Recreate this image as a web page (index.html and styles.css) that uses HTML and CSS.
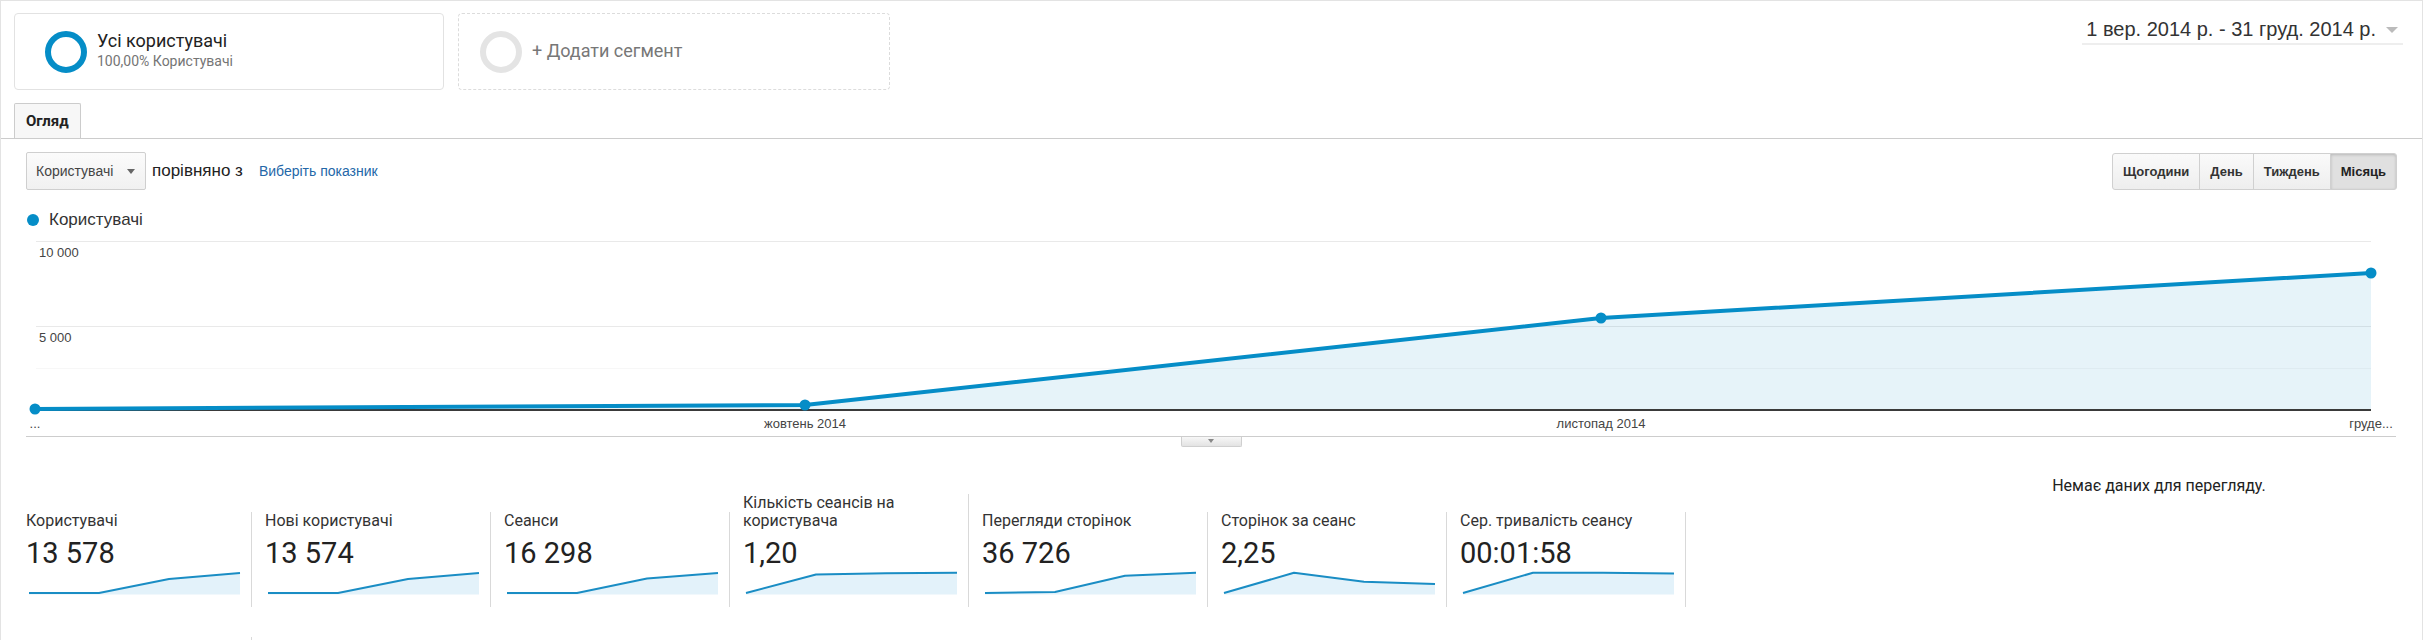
FILE: index.html
```html
<!DOCTYPE html>
<html lang="uk">
<head>
<meta charset="utf-8">
<title>Огляд</title>
<link rel="stylesheet" href="styles.css">
</head>
<body>
<div class="wrap">
  <header class="top">
    <div class="seg seg-all">
      <span class="ring"></span>
      <div class="seg-text">
        <div class="seg-title">Усі користувачі</div>
        <div class="seg-sub">100,00% Користувачі</div>
      </div>
    </div>
    <div class="seg seg-add">
      <span class="ring ring-off"></span>
      <span class="seg-add-label">+ Додати сегмент</span>
    </div>
    <div class="date">
      <span>1 вер. 2014 р. - 31 груд. 2014 р.</span>
      <span class="caret"></span>
    </div>
  </header>

  <nav class="tabs">
    <div class="tab">Огляд</div>
  </nav>

  <div class="controls">
    <div class="select">
      <span>Користувачі</span>
      <span class="select-caret"></span>
    </div>
    <span class="vs">порівняно з</span>
    <a class="pick" href="#">Виберіть показник</a>
    <div class="btn-group">
      <span class="btn">Щогодини</span>
      <span class="btn">День</span>
      <span class="btn">Тиждень</span>
      <span class="btn active">Місяць</span>
    </div>
  </div>

  <div class="legend">
    <span class="dot"></span>
    <span class="legend-text">Користувачі</span>
  </div>

  <svg class="chart" width="2421" height="206" viewBox="1 230 2421 206">
    <line x1="36" y1="241.5" x2="2371" y2="241.5" stroke="#e9e9e9" stroke-width="1"/>
    <line x1="36" y1="326.5" x2="2371" y2="326.5" stroke="#e9e9e9" stroke-width="1"/>
    <line x1="36" y1="368.5" x2="2371" y2="368.5" stroke="#f7f7f7" stroke-width="1"/>
    <text x="39" y="256.5" class="axis-t">10 000</text>
    <text x="39" y="341.5" class="axis-t">5 000</text>
    <polygon points="35,409 805,405 1601,318 2371,273 2371,410 35,410" fill="rgba(5,141,199,0.1)"/>
    <line x1="35" y1="410" x2="2371" y2="410" stroke="#3a3a3a" stroke-width="2"/>
    <polyline points="35,409 805,405 1601,318 2371,273" fill="none" stroke="#058dc7" stroke-width="4" stroke-linejoin="round"/>
    <circle cx="35" cy="409" r="5.5" fill="#058dc7"/>
    <circle cx="805" cy="405" r="5.5" fill="#058dc7"/>
    <circle cx="1601" cy="318" r="5.5" fill="#058dc7"/>
    <circle cx="2371" cy="273" r="5.5" fill="#058dc7"/>
    <text x="35" y="428" class="axis-t" text-anchor="middle">...</text>
    <text x="805" y="428" class="axis-t" text-anchor="middle">жовтень 2014</text>
    <text x="1601" y="428" class="axis-t" text-anchor="middle">листопад 2014</text>
    <text x="2371" y="428" class="axis-t" text-anchor="middle">груде...</text>
  </svg>

  <div class="chart-foot">
    <div class="toggle"><span class="toggle-caret"></span></div>
  </div>

  <section class="summary">
    <div class="tiles">
      <div class="tile-row">
        <div class="tile">
          <div class="tile-label">Користувачі</div>
          <div class="tile-value">13 578</div>
          <svg class="spark" viewBox="0 0 211 26"><polygon points="0,24 70,24 140,10 211,4 211,25.5 0,25.5" class="spark-fill"/><polyline points="0,24 70,24 140,10 211,4" class="spark-line"/></svg>
        </div>
        <div class="tile">
          <div class="tile-label">Нові користувачі</div>
          <div class="tile-value">13 574</div>
          <svg class="spark" viewBox="0 0 211 26"><polygon points="0,24 70,24 140,10 211,4 211,25.5 0,25.5" class="spark-fill"/><polyline points="0,24 70,24 140,10 211,4" class="spark-line"/></svg>
        </div>
        <div class="tile">
          <div class="tile-label">Сеанси</div>
          <div class="tile-value">16 298</div>
          <svg class="spark" viewBox="0 0 211 26"><polygon points="0,24 70,24 140,9.5 211,4 211,25.5 0,25.5" class="spark-fill"/><polyline points="0,24 70,24 140,9.5 211,4" class="spark-line"/></svg>
        </div>
        <div class="tile">
          <div class="tile-label">Кількість сеансів на<br>користувача</div>
          <div class="tile-value">1,20</div>
          <svg class="spark" viewBox="0 0 211 26"><polygon points="0,24 70,5.5 140,4.3 211,3.8 211,25.5 0,25.5" class="spark-fill"/><polyline points="0,24 70,5.5 140,4.3 211,3.8" class="spark-line"/></svg>
        </div>
        <div class="tile">
          <div class="tile-label">Перегляди сторінок</div>
          <div class="tile-value">36 726</div>
          <svg class="spark" viewBox="0 0 211 26"><polygon points="0,24 70,23 140,6.7 211,3.8 211,25.5 0,25.5" class="spark-fill"/><polyline points="0,24 70,23 140,6.7 211,3.8" class="spark-line"/></svg>
        </div>
        <div class="tile">
          <div class="tile-label">Сторінок за сеанс</div>
          <div class="tile-value">2,25</div>
          <svg class="spark" viewBox="0 0 211 26"><polygon points="0,24 70,3.8 140,12.7 211,15 211,25.5 0,25.5" class="spark-fill"/><polyline points="0,24 70,3.8 140,12.7 211,15" class="spark-line"/></svg>
        </div>
        <div class="tile">
          <div class="tile-label">Сер. тривалість сеансу</div>
          <div class="tile-value">00:01:58</div>
          <svg class="spark" viewBox="0 0 211 26"><polygon points="0,24 70,3.8 140,3.8 211,4.5 211,25.5 0,25.5" class="spark-fill"/><polyline points="0,24 70,3.8 140,3.8 211,4.5" class="spark-line"/></svg>
        </div>
      </div>
      <div class="tile-row tile-row-2">
        <div class="tile tile-empty"></div>
      </div>
    </div>
    <div class="nodata">Немає даних для перегляду.</div>
  </section>
</div>
</body>
</html>
```

FILE: styles.css
```css
* { box-sizing: border-box; }
html, body { margin: 0; padding: 0; background: #fff; }
body {
  font-family: Arial, "Liberation Sans", sans-serif;
  color: #222;
  width: 2423px;
  height: 640px;
  overflow: hidden;
}
.wrap {
  border: 1px solid #e3e3e3;
  border-bottom: 0;
  min-height: 720px;
}

/* header */
.top {
  display: flex;
  align-items: flex-start;
  padding: 12px 19px 0 13px;
}
.seg {
  height: 77px;
  border-radius: 4px;
  display: flex;
  align-items: center;
  font-family: Roboto, "Liberation Sans", sans-serif;
}
.seg-all {
  width: 430px;
  border: 1px solid #e2e2e2;
  padding-left: 30px;
}
.seg-add {
  width: 432px;
  margin-left: 14px;
  border: 1px dashed #dcdcdc;
  padding-left: 21px;
}
.ring {
  width: 42px;
  height: 42px;
  border-radius: 50%;
  border: 6px solid #058dc7;
  flex: none;
}
.ring-off { border-color: #e4e4e4; }
.seg-text { margin-left: 10px; margin-bottom: 5px; }
.seg-title { font-size: 18px; line-height: 21px; color: #222; }
.seg-sub { font-size: 14px; line-height: 16px; color: #757575; margin-top: 2px; }
.seg-add-label { margin-left: 10px; margin-bottom: 3px; font-size: 18px; color: #777; }

.date {
  margin-left: auto;
  margin-top: 4px;
  display: flex;
  align-items: center;
  padding: 0 5px 2px 4px;
  border-bottom: 2px solid #eee;
  font-size: 20px;
  line-height: 24px;
  color: #333;
}
.caret {
  margin-left: 10px;
  margin-top: 2px;
  width: 0;
  height: 0;
  border-left: 6.5px solid transparent;
  border-right: 6.5px solid transparent;
  border-top: 6px solid #bbb;
}

/* tabs */
.tabs {
  display: flex;
  margin-top: 13px;
  padding-left: 13px;
  border-bottom: 1px solid #ccc;
}
.tab {
  height: 35px;
  padding: 0 11px;
  border: 1px solid #ccc;
  border-bottom: 0;
  border-radius: 2px 2px 0 0;
  background: #f7f7f7;
  font-family: Roboto, "Liberation Sans", sans-serif;
  font-weight: 700;
  font-size: 15px;
  line-height: 34px;
  color: #222;
}

/* controls */
.controls {
  display: flex;
  align-items: center;
  height: 38px;
  margin: 13px 25px 0 25px;
}
.select {
  width: 120px;
  height: 38px;
  display: flex;
  align-items: center;
  justify-content: space-between;
  padding: 0 10px 0 9px;
  border: 1px solid #cfcfcf;
  border-radius: 2px;
  background: linear-gradient(#fbfbfb, #f1f1f1);
  font-size: 14px;
  color: #444;
}
.select-caret {
  width: 0;
  height: 0;
  border-left: 4px solid transparent;
  border-right: 4px solid transparent;
  border-top: 5px solid #666;
}
.vs {
  margin-left: 6px;
  font-size: 17px;
  line-height: 20px;
  color: #222;
}
.pick {
  margin-left: 16px;
  font-size: 14px;
  line-height: 16px;
  color: #2467a8;
  text-decoration: none;
}
.btn-group {
  margin-left: auto;
  display: flex;
  height: 37px;
}
.btn {
  display: flex;
  align-items: center;
  padding: 0 10px;
  border: 1px solid #d0d0d0;
  margin-left: -1px;
  background: linear-gradient(#fafafa, #eeeeee);
  font-weight: 700;
  font-size: 13px;
  color: #333;
}
.btn:first-child { border-radius: 3px 0 0 3px; margin-left: 0; }
.btn:last-child { border-radius: 0 3px 3px 0; }
.btn.active {
  background: #e0e0e0;
  box-shadow: inset 0 1px 3px rgba(0, 0, 0, 0.18);
  color: #222;
}

/* legend */
.legend {
  display: flex;
  align-items: center;
  height: 20px;
  margin: 20px 0 0 26px;
}
.dot {
  width: 12px;
  height: 12px;
  border-radius: 50%;
  background: #058dc7;
}
.legend-text {
  margin-left: 10px;
  font-size: 17px;
  color: #333;
}

/* chart */
.chart { display: block; }
.axis-t {
  font-family: Arial, "Liberation Sans", sans-serif;
  font-size: 13px;
  fill: #444;
}
.chart-foot {
  margin: 0 26px 0 25px;
  border-top: 1px solid #cdcdcd;
}
.toggle {
  width: 61px;
  height: 10px;
  margin: 0 auto;
  border: 1px solid #cfcfcf;
  border-top: 0;
  border-radius: 0 0 2px 2px;
  background: linear-gradient(#f7f7f7, #e3e3e3);
  display: flex;
  justify-content: center;
  padding-top: 2px;
}
.toggle-caret {
  width: 0;
  height: 0;
  border-left: 3px solid transparent;
  border-right: 3px solid transparent;
  border-top: 4px solid #888;
}

/* summary */
.summary { display: flex; }
.tiles { padding: 47px 0 0 12px; }
.tile-row { display: flex; align-items: flex-end; }
.tile-row-2 { margin-top: 30px; }
.tile {
  width: 239px;
  padding: 0 0 12px 13px;
  border-right: 1px solid #d9d9d9;
  font-family: Roboto, "Liberation Sans", sans-serif;
}
.tile-empty { height: 95px; }
.tile-label {
  font-size: 16px;
  line-height: 18px;
  color: #333;
}
.tile-value {
  margin-top: 7px;
  font-size: 29px;
  line-height: 32px;
  color: #222;
}
.spark {
  display: block;
  width: 211px;
  height: 26px;
  margin-left: 3px;
  overflow: visible;
}
.spark-fill { fill: #e3f2fa; }
.spark-line {
  fill: none;
  stroke: #1a8dc4;
  stroke-width: 2;
  stroke-linejoin: round;
}
.nodata {
  flex: 1;
  text-align: center;
  padding: 30px 0 0 210px;
  font-family: Roboto, "Liberation Sans", sans-serif;
  font-size: 16px;
  line-height: 18px;
  color: #222;
}
```
